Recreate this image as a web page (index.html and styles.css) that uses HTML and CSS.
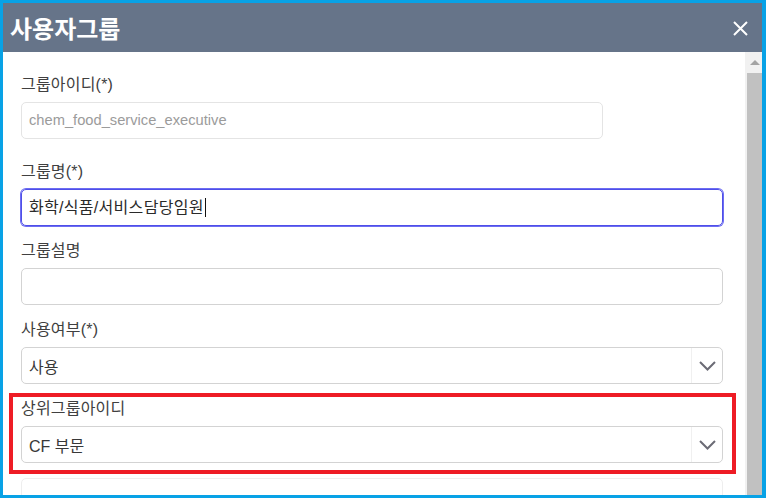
FILE: index.html
```html
<!DOCTYPE html>
<html lang="ko">
<head>
<meta charset="utf-8">
<title>사용자그룹</title>
<link rel="stylesheet" href="styles.css">
</head>
<body>
<div class="frame">
  <header class="header">
    <h1 class="title">사용자그룹</h1>
    <button class="close" aria-label="닫기">
      <svg width="15" height="15" viewBox="0 0 15 15"><path d="M1 1 L14 14 M14 1 L1 14" stroke="#fff" stroke-width="2" fill="none"/></svg>
    </button>
  </header>
  <div class="body">
    <div class="content">
      <div class="field field-first">
        <div class="label">그룹아이디(*)</div>
        <div class="input input-disabled input-short">chem_food_service_executive</div>
      </div>
      <div class="field">
        <div class="label">그룹명(*)</div>
        <div class="input input-focus">화학/식품/서비스담당임원<span class="caret"></span></div>
      </div>
      <div class="field">
        <div class="label">그룹설명</div>
        <div class="input"></div>
      </div>
      <div class="field">
        <div class="label">사용여부(*)</div>
        <div class="select">
          <span class="select-text">사용</span>
          <span class="select-btn"><svg width="17" height="10" viewBox="0 0 17 10"><path d="M1 1 L8.5 8.5 L16 1" stroke="#6b6b75" stroke-width="2" fill="none"/></svg></span>
        </div>
      </div>
      <div class="field field-marked">
        <div class="label">상위그룹아이디</div>
        <div class="select">
          <span class="select-text">CF 부문</span>
          <span class="select-btn"><svg width="17" height="10" viewBox="0 0 17 10"><path d="M1 1 L8.5 8.5 L16 1" stroke="#6b6b75" stroke-width="2" fill="none"/></svg></span>
        </div>
      </div>
      <div class="input input-faint"></div>
    </div>
    <div class="scrollbar">
      <div class="scroll-up"><span class="arrow-up"></span></div>
      <div class="scroll-thumb"></div>
    </div>
  </div>
</div>
</body>
</html>
```
FILE: styles.css
```css
html, body {
  margin: 0;
  padding: 0;
  width: 766px;
  height: 498px;
  overflow: hidden;
  background: #fff;
}
body {
  font-family: "Liberation Sans", "Noto Sans CJK KR", sans-serif;
  color: #383838;
}
.frame {
  box-sizing: border-box;
  width: 766px;
  height: 498px;
  border: 3px solid #08a2e6;
  border-right-width: 4px;
  display: flex;
  flex-direction: column;
}
.header {
  height: 49px;
  flex: none;
  background: #667489;
  display: flex;
  align-items: center;
  justify-content: space-between;
  padding: 0 14px 0 7px;
}
.title {
  margin: 0;
  font-family: "Noto Sans CJK KR", sans-serif;
  font-size: 24px;
  font-weight: 700;
  color: #fff;
  line-height: 30px;
  letter-spacing: 0;
}
.close {
  background: none;
  border: 0;
  padding: 0;
  width: 15px;
  height: 15px;
  display: flex;
  margin-top: 1px;
}
.body {
  flex: 1;
  display: flex;
  overflow: hidden;
}
.content {
  flex: 1;
  padding: 23px 22px 0 18px;
  overflow: hidden;
}
.field {
  position: relative;
  margin-bottom: 15px;
}
.field-first {
  margin-bottom: 23px;
}
.label {
  font-size: 16px;
  line-height: 20px;
  height: 20px;
  margin-bottom: 7px;
  color: #404040;
  letter-spacing: 0.2px;
}
.input {
  box-sizing: border-box;
  height: 37px;
  border: 1px solid #d3d3d3;
  border-radius: 5px;
  padding: 0 7px;
  font-size: 16px;
  line-height: 35px;
  color: #333;
  display: flex;
  align-items: center;
  white-space: nowrap;
  letter-spacing: 0.3px;
}
.input-short {
  width: 582px;
}
.input-disabled {
  border-color: #e4e4e4;
  color: #9b9b9b;
  font-size: 14.7px;
  letter-spacing: 0;
}
.input-focus {
  border-color: #4f4fe8;
  box-shadow: 0 0 0 1px #6d6df2;
  color: #2a2a2a;
}
.caret {
  display: inline-block;
  width: 1px;
  height: 19px;
  background: #111;
  margin-left: 1px;
}
.input-faint {
  border-color: #eeeeee;
}
.select {
  box-sizing: border-box;
  height: 37px;
  border: 1px solid #d3d3d3;
  border-radius: 5px;
  display: flex;
  align-items: stretch;
  font-size: 16px;
  color: #383838;
}
.select-text {
  flex: 1;
  padding-left: 7px;
  display: flex;
  align-items: center;
}
.select-btn {
  width: 30px;
  border-left: 1px solid #f0f0f0;
  display: flex;
  align-items: center;
  justify-content: center;
  padding-top: 1px;
}
.field-marked::after {
  content: "";
  position: absolute;
  top: -6px;
  left: -12px;
  right: -13px;
  bottom: -11px;
  border: 4px solid #ee1c25;
  pointer-events: none;
}
.scrollbar {
  width: 17px;
  flex: none;
  background: #f1f1f1;
  display: flex;
  flex-direction: column;
}
.scroll-up {
  height: 21px;
  display: flex;
  justify-content: center;
  padding-top: 8px;
  box-sizing: border-box;
  padding-left: 2px;
}
.arrow-up {
  width: 0;
  height: 0;
  border-left: 5px solid transparent;
  border-right: 5px solid transparent;
  border-bottom: 5px solid #a3a3a3;
}
.scroll-thumb {
  flex: 1;
  margin-left: 2px;
  background: #c1c1c1;
}
```
